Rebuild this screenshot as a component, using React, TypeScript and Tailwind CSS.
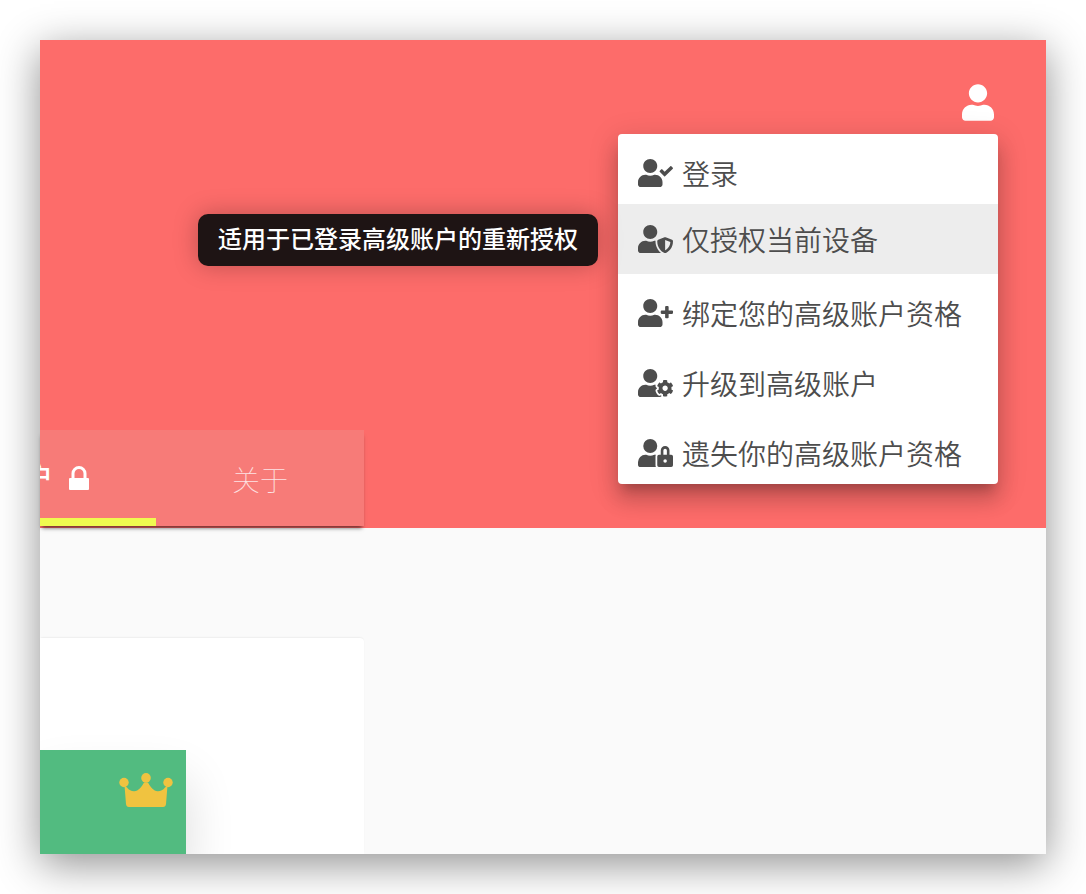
import type { IconType } from "react-icons";
import {
  FaUser,
  FaUserCheck,
  FaUserCog,
  FaUserLock,
  FaUserPlus,
  FaUserShield,
} from "react-icons/fa";

type MenuItem = {
  label: string;
  icon: IconType;
  active?: boolean;
  tooltip?: string;
};

const menuItems: MenuItem[] = [
  { label: "登录", icon: FaUserCheck },
  {
    label: "仅授权当前设备",
    icon: FaUserShield,
    active: true,
    tooltip: "适用于已登录高级账户的重新授权",
  },
  { label: "绑定您的高级账户资格", icon: FaUserPlus },
  { label: "升级到高级账户", icon: FaUserCog },
  { label: "遗失你的高级账户资格", icon: FaUserLock },
];

function LockIcon() {
  return (
    <svg viewBox="0 0 20 24" className="h-6 w-5 shrink-0" aria-hidden="true">
      <path
        d="M4 13V7.5a6 6 0 0 1 12 0V13"
        fill="none"
        stroke="currentColor"
        strokeWidth="3"
      />
      <rect y="12" width="20" height="12" rx="1" fill="currentColor" />
    </svg>
  );
}

function CrownIcon() {
  return (
    <svg
      viewBox="0 0 54 34"
      className="h-[34px] w-[54px] text-[#f0c340]"
      fill="currentColor"
      aria-hidden="true"
    >
      <circle cx="5" cy="9.5" r="4.7" />
      <circle cx="27" cy="4.9" r="4.8" />
      <circle cx="49" cy="9.5" r="4.7" />
      <path d="M5.5 12.5L8 14.5C10 17.2 12.5 18.3 15.3 18.2C19.5 18 22.5 14 25 9.5H29C31.5 14 34.5 18 38.7 18.2C41.5 18.3 44 17.2 46 14.5L48.5 12.5L47 31C46.8 33 45.8 34 44 34H10C8.2 34 7.2 33 7 31Z" />
    </svg>
  );
}

function AccountMenu() {
  return (
    <div
      role="menu"
      className="absolute top-full -right-1 mt-[13px] w-[380px] rounded bg-white shadow-[0_10px_10px_-6px_rgba(0,0,0,0.2),0_16px_20px_2px_rgba(0,0,0,0.14),0_6px_28px_4px_rgba(0,0,0,0.12)]"
    >
      {menuItems.map((item) => (
        <div key={item.label} className="relative">
          <button
            type="button"
            role="menuitem"
            aria-describedby={item.tooltip ? "menu-tooltip" : undefined}
            className={[
              "flex h-[70px] w-full items-center gap-[9px] px-5 text-[28px] leading-7 font-[350] whitespace-nowrap text-[#4d4d4d]",
              item.active ? "bg-[#ededed]" : "pt-2",
            ].join(" ")}
          >
            <item.icon className="h-7 w-[35px] shrink-0" />
            {item.label}
          </button>

          {item.tooltip && (
            <div
              id="menu-tooltip"
              role="tooltip"
              className="absolute top-2.5 right-full mr-5 rounded-[10px] bg-[#1e1414] px-5 pt-1.5 pb-2.5 text-2xl leading-9 font-medium whitespace-nowrap text-white shadow-[0_0_24px_rgba(0,0,0,0.25)]"
            >
              {item.tooltip}
            </div>
          )}
        </div>
      ))}
    </div>
  );
}

export default function App() {
  return (
    <div className="flex min-h-screen flex-col bg-white p-10 font-['Noto_Sans_CJK_SC',sans-serif]">
      <main className="flex flex-1 flex-col bg-[#fafafa] shadow-[0_10px_40px_rgba(0,0,0,0.44)]">
        <header className="flex min-h-[488px] flex-col justify-between bg-[#fd6c6a] pb-0.5">
          <div className="flex justify-end pt-11 pr-13">
            <div className="relative z-10">
              <button
                type="button"
                aria-label="账户"
                aria-haspopup="menu"
                aria-expanded="true"
                className="block text-white"
              >
                <FaUser className="h-[37px] w-8" />
              </button>
              <AccountMenu />
            </div>
          </div>

          <nav className="flex h-24 w-81 bg-[#f77b78] text-[28px] shadow-[0_4px_4px_-2px_rgba(0,0,0,0.6)]">
            <button
              type="button"
              className="flex w-29 items-center gap-4 overflow-hidden border-b-8 border-[#f0fa50] pt-2 font-medium text-white"
            >
              <span className="-ml-[15px] pb-1">户</span>
              <LockIcon />
            </button>
            <button
              type="button"
              className="flex-1 pt-0.5 font-thin text-white/80"
            >
              关于
            </button>
          </nav>
        </header>

        <section className="flex flex-1 flex-col pt-[110px]">
          <div className="flex w-81 flex-1 flex-col overflow-hidden rounded-tr bg-white pt-28 shadow-[0_-1px_2px_-1px_rgba(0,0,0,0.15)]">
            <div className="flex w-[146px] flex-1 items-start justify-end bg-[#52bb80] pt-[23px] pr-[13px] shadow-[0_30px_50px_rgba(0,0,0,0.14)]">
              <CrownIcon />
            </div>
          </div>
        </section>
      </main>
    </div>
  );
}
